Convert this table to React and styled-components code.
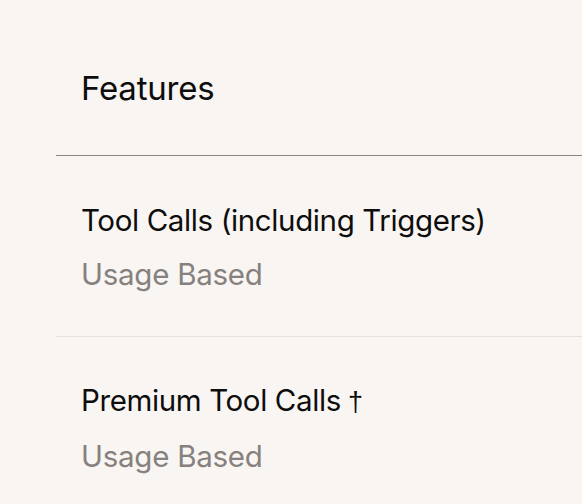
import styled, { createGlobalStyle } from "styled-components";

const GlobalStyle = createGlobalStyle`
  html, body {
    margin: 0;
    padding: 0;
    background: #f9f5f2;
  }
  body {
    font-family: Inter, "Noto Sans", sans-serif;
    color: #0d0d0d;
  }
`;

const Page = styled.div`
  padding-left: 56px;
  width: 526px;
  overflow: hidden;
`;

const HeaderRow = styled.div`
  height: 156px;
  display: flex;
  align-items: center;
  padding-left: 25px;
  border-bottom: 1px solid #8a8583;
  box-sizing: border-box;
  padding-top: 20px;
`;

const Title = styled.h2`
  margin: 0;
  font-size: 33px;
  font-weight: 400;
  letter-spacing: -0.2px;
`;

const Row = styled.div`
  height: ${(p) => p.height}px;
  display: flex;
  flex-direction: column;
  justify-content: center;
  gap: 18px;
  padding-left: 25px;
  padding-top: 2px;
  border-bottom: ${(p) => (p.last ? "none" : "1px solid #e6e0dc")};
  box-sizing: border-box;
`;

const Name = styled.div`
  font-size: 29.5px;
  font-weight: 400;
  line-height: 36px;
  letter-spacing: -0.38px;
`;

const Dagger = styled.span`
  font-family: "Liberation Sans", Arial, sans-serif;
  font-size: 27px;
`;

const Value = styled.div`
  font-size: 29.5px;
  font-weight: 400;
  line-height: 36px;
  color: #86817e;
  letter-spacing: -0.25px;
`;

const features = [
  { name: "Tool Calls (including Triggers)", value: "Usage Based" },
  { name: "Premium Tool Calls", dagger: true, value: "Usage Based" },
];

export default function App() {
  return (
    <>
      <GlobalStyle />
      <Page>
        <HeaderRow>
          <Title>Features</Title>
        </HeaderRow>
        {features.map((f, i) => (
          <Row key={f.name} height={i === 0 ? 181 : 180} last={i === features.length - 1}>
            <Name>
              {f.name}
              {f.dagger && <Dagger> {"\u2020"}</Dagger>}
            </Name>
            <Value>{f.value}</Value>
          </Row>
        ))}
      </Page>
    </>
  );
}
